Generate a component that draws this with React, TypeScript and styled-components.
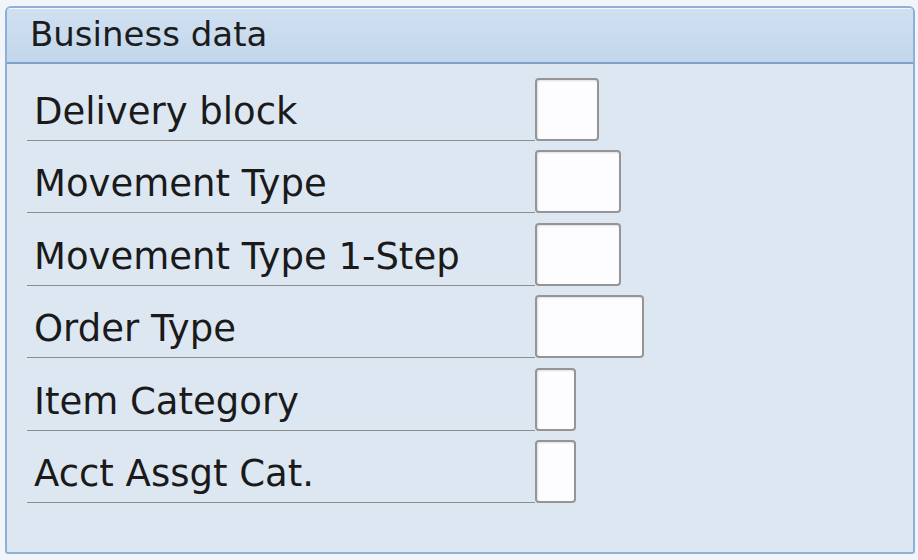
import React from "react";
import styled, { createGlobalStyle } from "styled-components";

const GlobalStyle = createGlobalStyle`
  html, body {
    margin: 0;
    padding: 0;
    background: #f1f4f8;
  }
  body {
    font-family: "DejaVu Sans", Tahoma, sans-serif;
  }
`;

interface FieldRow {
  label: string;
  width: number;
}

const fields: FieldRow[] = [
  { label: "Delivery block", width: 64 },
  { label: "Movement Type", width: 86 },
  { label: "Movement Type 1-Step", width: 86 },
  { label: "Order Type", width: 109 },
  { label: "Item Category", width: 41 },
  { label: "Acct Assgt Cat.", width: 41 },
];

export default function App() {
  return (
    <>
      <GlobalStyle />
      <Page>
        <Panel>
          <Header>Business data</Header>
          <Body>
            {fields.map((field) => (
              <Row key={field.label}>
                <Label>{field.label}</Label>
                <InputBox $width={field.width} />
              </Row>
            ))}
          </Body>
        </Panel>
      </Page>
    </>
  );
}

const Page = styled.div`
  width: 918px;
  height: 560px;
  padding: 6px 0 0 5px;
  box-sizing: border-box;
`;

const Panel = styled.div`
  width: 910px;
  height: 548px;
  box-sizing: border-box;
  border: 2px solid #8eb0d4;
  border-radius: 6px 6px 3px 3px;
  background: #dde7f2;
  overflow: hidden;
`;

const Header = styled.div`
  height: 49px;
  box-sizing: content-box;
  border-top: 1px solid #f4f8fc;
  border-bottom: 2px solid #7fa2c8;
  background: linear-gradient(#d0e0f1, #c3d6eb);
  padding: 0 0 4px 23px;
  display: flex;
  align-items: center;
  font-size: 34px;
  color: #1c1c1c;
`;

const Body = styled.div`
  padding: 14px 0 0 20px;
  display: flex;
  flex-direction: column;
  gap: 9.4px;
`;

const Row = styled.div`
  display: flex;
  align-items: flex-end;
  height: 63px;
`;

const Label = styled.div`
  width: 508px;
  height: 62px;
  border-bottom: 1px solid #8d8d8d;
  display: flex;
  align-items: center;
  padding: 4px 0 0 7px;
  box-sizing: border-box;
  font-size: 37px;
  color: #1a1a1a;
  white-space: nowrap;
`;

const InputBox = styled.div<{ $width: number }>`
  width: ${(p) => p.$width}px;
  height: 63px;
  box-sizing: border-box;
  border: 2px solid #959595;
  border-radius: 4px;
  background: #fdfcfe;
  box-shadow: inset 1px 1px 2px rgba(0, 0, 0, 0.12);
`;
